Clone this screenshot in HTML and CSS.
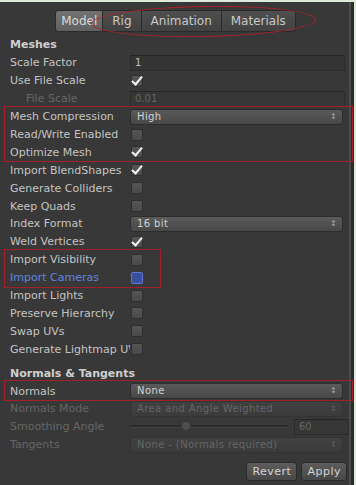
FILE: index.html
```html
<!DOCTYPE html>
<html lang="en">
<head>
    <meta charset="UTF-8">
    <title>Model Import Settings</title>
    <link rel="stylesheet" href="styles.css">
</head>
<body>
<div class="inspector">
    <div class="tabs">
        <span class="tab active">Model</span>
        <span class="tab">Rig</span>
        <span class="tab">Animation</span>
        <span class="tab">Materials</span>
        <span class="ring"></span>
    </div>

    <div class="header">Meshes</div>
    <div class="row"><span class="label">Scale Factor</span><span class="field">1</span></div>
    <div class="row"><span class="label">Use File Scale</span><span class="check on"></span></div>
    <div class="row off"><span class="label indent">File Scale</span><span class="field">0.01</span></div>
    <div class="group wide">
        <div class="row"><span class="label">Mesh Compression</span><span class="select">High</span></div>
        <div class="row"><span class="label">Read/Write Enabled</span><span class="check"></span></div>
        <div class="row"><span class="label">Optimize Mesh</span><span class="check on"></span></div>
    </div>
    <div class="row"><span class="label">Import BlendShapes</span><span class="check on"></span></div>
    <div class="row"><span class="label">Generate Colliders</span><span class="check"></span></div>
    <div class="row"><span class="label">Keep Quads</span><span class="check"></span></div>
    <div class="row"><span class="label">Index Format</span><span class="select">16 bit</span></div>
    <div class="row"><span class="label">Weld Vertices</span><span class="check on"></span></div>
    <div class="group narrow">
        <div class="row"><span class="label">Import Visibility</span><span class="check"></span></div>
        <div class="row focus"><span class="label">Import Cameras</span><span class="check"></span></div>
    </div>
    <div class="row"><span class="label">Import Lights</span><span class="check"></span></div>
    <div class="row"><span class="label">Preserve Hierarchy</span><span class="check"></span></div>
    <div class="row"><span class="label">Swap UVs</span><span class="check"></span></div>
    <div class="row"><span class="label">Generate Lightmap UVs</span><span class="check"></span></div>

    <div class="header second">Normals &amp; Tangents</div>
    <div class="group wide">
        <div class="row"><span class="label">Normals</span><span class="select">None</span></div>
    </div>
    <div class="row off"><span class="label">Normals Mode</span><span class="select">Area and Angle Weighted</span></div>
    <div class="row off">
        <span class="label">Smoothing Angle</span>
        <span class="slider"><span class="track"><span class="thumb"></span></span><span class="field num">60</span></span>
    </div>
    <div class="row off"><span class="label">Tangents</span><span class="select">None - (Normals required)</span></div>

    <div class="actions">
        <button class="btn">Revert</button>
        <button class="btn">Apply</button>
    </div>
</div>
</body>
</html>
```

FILE: styles.css
```css
html, body { margin: 0; padding: 0; }
body { background: #dfe9dc; width: 356px; height: 485px; overflow: hidden; font-family: "DejaVu Sans", Verdana, sans-serif; font-size: 11px; color: #c4c4c4; }
.inspector { position: relative; margin-top: 2px; width: 349px; height: 483px; background: #383838; border-right: 2px solid #4c4c4c; box-shadow: 3px 0 0 #2c2c2c; }

.tabs { position: relative; display: flex; justify-content: center; padding: 8px 0 0 2px; }
.tab { height: 20px; line-height: 20px; padding: 0 9px; font-size: 12px; color: #c8c8c8; background: linear-gradient(#4e4e4e, #424242); border: 1px solid #2a2a2a; border-left: none; }
.tab:first-child { border-left: 1px solid #2a2a2a; border-radius: 3px 0 0 3px; }
.tab:nth-child(4) { border-radius: 0 3px 3px 0; }
.tab.active { background: linear-gradient(#727272, #606060); color: #dadada; padding: 0 5px; }
.ring { position: absolute; left: 91px; top: 4px; width: 223px; height: 29px; border: 1.5px solid #b3202a; border-radius: 50%; transform: rotate(-1deg); }

.header { padding: 6px 0 0 10px; height: 16px; font-weight: bold; font-size: 11px; color: #cfcfcf; }
.header.second { padding-top: 9px; height: 15px; }

.row { display: flex; align-items: center; height: 17.9px; }
.label { width: 120px; padding-left: 10px; white-space: nowrap; overflow: hidden; flex: none; }
.label.indent { padding-left: 26px; width: 104px; }
.row.off { color: #666; }
.row.focus .label { color: #5c86e0; }

.field { width: 209px; height: 14px; line-height: 14px; padding-left: 4px; background: #343434; border: 1px solid #2c2c2c; border-top-color: #262626; color: #c0c0c0; font-size: 10px; }
.row.off .field { color: #666; background: #363636; }

.check { position: relative; width: 10px; height: 10px; margin-left: 1px; background: linear-gradient(#555, #4a4a4a); border: 1px solid #2e2e2e; border-radius: 2px; }
.check.on::after { content: ""; position: absolute; left: 2px; top: -2px; width: 4px; height: 9px; border: solid #f2f2f2; border-width: 0 2.5px 2.5px 0; transform: rotate(40deg); }
.row.focus .check { background: #3b4f9e; border-color: #5f78d8; }

.select { position: relative; width: 205px; height: 14px; line-height: 14px; padding-left: 6px; background: linear-gradient(#5a5a5a, #474747); border: 1px solid #2c2c2c; border-radius: 3px; color: #d2d2d2; font-size: 10px; letter-spacing: 0.4px; }
.select::after { content: "\2195"; position: absolute; right: 5px; top: 0; font-size: 8px; color: #a8a8a8; }
.row.off .select { color: #666; background: linear-gradient(#414141, #3b3b3b); border-color: #333; }
.row.off .select::after { color: #606060; }

.slider { display: flex; align-items: center; gap: 6px; }
.track { position: relative; width: 158px; height: 2px; background: #2c2c2c; border-bottom: 1px solid #444; }
.thumb { position: absolute; left: 51px; top: -4px; width: 8px; height: 8px; border-radius: 50%; background: #4e4e4e; border: 1px solid #3a3a3a; }
.field.num { width: 49px; }

.group { position: relative; }
.group::after { content: ""; position: absolute; top: -2px; bottom: -1px; left: 4px; border: 1.5px solid #a3202a; pointer-events: none; }
.group.wide::after { right: -4px; }
.group.narrow::after { width: 155px; }

.actions { display: flex; justify-content: flex-end; gap: 4px; padding: 8px 2px 0 0; }
.btn { height: 19px; padding: 0 5px; font-family: "DejaVu Sans", Verdana, sans-serif; font-size: 11px; color: #d4d4d4; background: linear-gradient(#5c5c5c, #474747); border: 1px solid #2a2a2a; border-radius: 3px; letter-spacing: 0.5px; }
```
